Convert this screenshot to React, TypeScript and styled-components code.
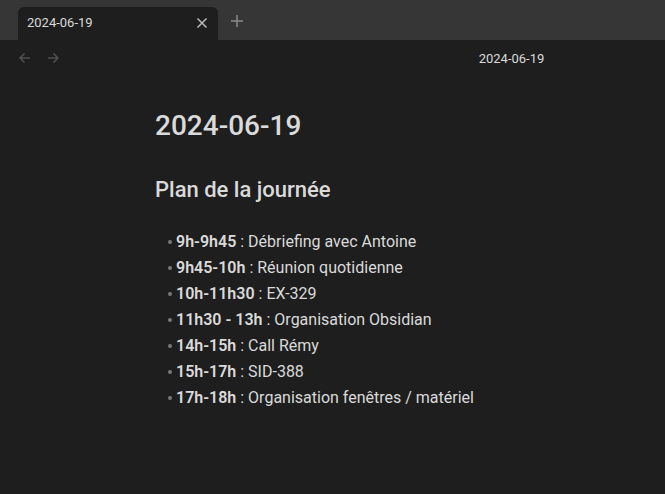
import { createGlobalStyle } from "styled-components";
import styled from "styled-components";

import type { ReactElement } from "react";

const GlobalStyle = createGlobalStyle`
	html, body {
		margin: 0;
		padding: 0;
		background: #1e1e1e;
	}
	body {
		font-family: Roboto, "Liberation Sans", sans-serif;
		color: #dadada;
	}
`;

const items: Array<[string, string]> = [
	["9h-9h45", "Débriefing avec Antoine"],
	["9h45-10h", "Réunion quotidienne"],
	["10h-11h30", "EX-329"],
	["11h30 - 13h", "Organisation Obsidian"],
	["14h-15h", "Call Rémy"],
	["15h-17h", "SID-388"],
	["17h-18h", "Organisation fenêtres / matériel"],
];

export default function App(): ReactElement {
	return (
		<>
			<GlobalStyle />
			<Window>
				<TabBar>
					<Tab>
						<TabTitle>2024-06-19</TabTitle>
						<CloseIcon width="14" height="14" viewBox="0 0 14 14">
							<path d="M2.5 2.5 L11.5 11.5 M11.5 2.5 L2.5 11.5" />
						</CloseIcon>
					</Tab>
					<NewTab width="14" height="14" viewBox="0 0 14 14">
						<path d="M7 1 V13 M1 7 H13" />
					</NewTab>
				</TabBar>
				<NavBar>
					<NavButtons>
						<NavIcon width="14" height="14" viewBox="0 0 14 14">
							<path d="M12 7 H2 M6.5 2.5 L2 7 L6.5 11.5" />
						</NavIcon>
						<NavIcon width="14" height="14" viewBox="0 0 14 14">
							<path d="M2 7 H12 M7.5 2.5 L12 7 L7.5 11.5" />
						</NavIcon>
					</NavButtons>
					<NavTitle>2024-06-19</NavTitle>
				</NavBar>
				<Content>
					<Title>2024-06-19</Title>
					<Heading>Plan de la journée</Heading>
					<List>
						{items.map(([time, label]) => (
							<Item key={time}>
								<Bullet />
								<span>
									<strong>{time}</strong> : {label}
								</span>
							</Item>
						))}
					</List>
				</Content>
			</Window>
		</>
	);
}

const Window = styled.div`
	display: flex;
	flex-direction: column;
	width: 665px;
	height: 494px;
	background: #1e1e1e;
	overflow: hidden;
`;

const TabBar = styled.div`
	display: flex;
	align-items: flex-end;
	height: 40px;
	padding-left: 18px;
	background: #363636;
	gap: 12px;
`;

const Tab = styled.div`
	display: flex;
	align-items: center;
	justify-content: space-between;
	width: 200px;
	height: 33px;
	box-sizing: border-box;
	padding: 0 9px 0 9px;
	background: #1e1e1e;
	border-radius: 6px 6px 0 0;
`;

const TabTitle = styled.span`
	font-size: 13px;
	color: #dadada;
	padding-bottom: 2px;
`;

const CloseIcon = styled.svg`
	fill: none;
	stroke: #bababa;
	stroke-width: 1.5;
	margin-bottom: 2px;
`;

const NewTab = styled.svg`
	fill: none;
	stroke: #8a8a8a;
	stroke-width: 1.5;
	margin-bottom: 12px;
`;

const NavBar = styled.div`
	display: grid;
	grid-template-columns: 1fr auto 1fr;
	align-items: center;
	height: 36px;
	padding: 0 18px;
`;

const NavButtons = styled.div`
	display: flex;
	gap: 14px;
`;

const NavIcon = styled.svg`
	fill: none;
	stroke: #4f4f4f;
	stroke-width: 1.5;
`;

const NavTitle = styled.div`
	font-size: 13px;
	color: #dadada;
	transform: translateX(179px);
`;

const Content = styled.div`
	display: flex;
	flex-direction: column;
	padding: 0 0 0 155px;
`;

const Title = styled.h1`
	margin: 33px 0 0;
	font-size: 28px;
	font-weight: 500;
	line-height: 34px;
	color: #dadada;
`;

const Heading = styled.h2`
	margin: 33px 0 0;
	font-size: 22px;
	font-weight: 500;
	line-height: 28px;
	color: #dadada;
`;

const List = styled.ul`
	list-style: none;
	margin: 25px 0 0;
	padding: 0 0 0 12px;
	display: flex;
	flex-direction: column;
`;

const Item = styled.li`
	display: flex;
	align-items: center;
	gap: 4px;
	font-size: 16px;
	line-height: 26px;
	color: #dadada;

	strong {
		font-weight: 600;
	}
`;

const Bullet = styled.span`
	width: 4px;
	height: 4px;
	border-radius: 50%;
	background: #7a7a7a;
	flex-shrink: 0;
	margin-left: 1px;
`;
